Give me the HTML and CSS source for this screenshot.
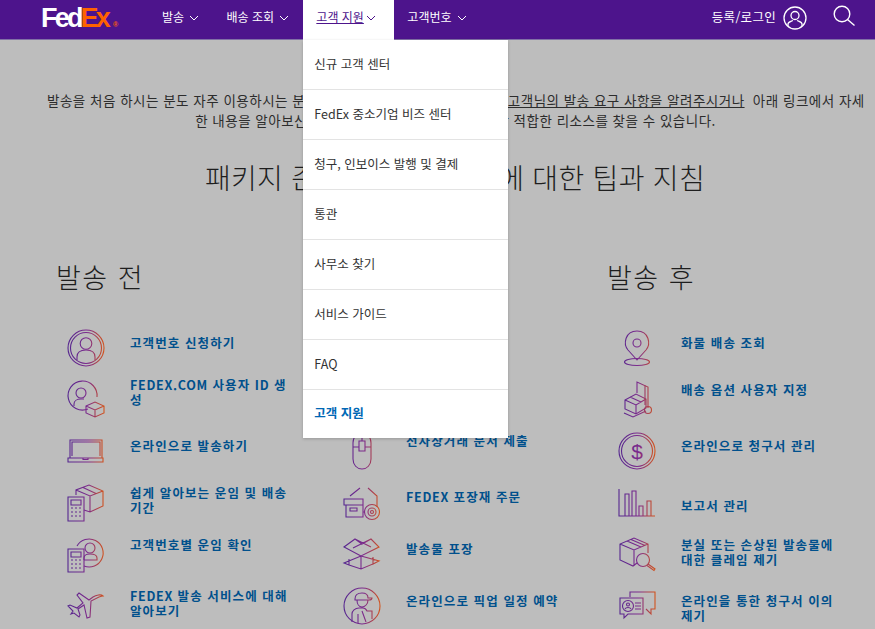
FILE: index.html
```html
<!DOCTYPE html>
<html lang="ko">
<head>
    <meta charset="UTF-8">
    <title>FedEx 고객 지원</title>
    <link rel="stylesheet" href="styles.css">
</head>
<body>
    <svg class="defs" width="0" height="0">
        <defs>
            <linearGradient id="g" gradientUnits="userSpaceOnUse" x1="4" y1="0" x2="40" y2="0">
                <stop offset="0" stop-color="#55268f"/>
                <stop offset="0.55" stop-color="#7d2b8c"/>
                <stop offset="1" stop-color="#d2531c"/>
            </linearGradient>
        </defs>
    </svg>

    <header class="top-nav">
        <a class="logo" href="#"><span class="logo-fed">Fed</span><span class="logo-ex">Ex</span><span class="logo-reg">®</span></a>
        <nav class="nav-links">
            <a href="#" class="nav-link nav-ship">발송 <svg class="chev" viewBox="0 0 10 6"><path d="M1 1l4 4 4-4"/></svg></a>
            <a href="#" class="nav-link nav-track">배송 조회 <svg class="chev" viewBox="0 0 10 6"><path d="M1 1l4 4 4-4"/></svg></a>
            <div class="nav-active">
                <a href="#" class="nav-link active"><u>고객 지원</u> <svg class="chev" viewBox="0 0 10 6"><path d="M1 1l4 4 4-4"/></svg></a>
                <ul class="dropdown">
                    <li><a href="#">신규 고객 센터</a></li>
                    <li><a href="#">FedEx 중소기업 비즈 센터</a></li>
                    <li><a href="#">청구, 인보이스 발행 및 결제</a></li>
                    <li><a href="#">통관</a></li>
                    <li><a href="#">사무소 찾기</a></li>
                    <li><a href="#">서비스 가이드</a></li>
                    <li><a href="#">FAQ</a></li>
                    <li class="dropdown-all"><a href="#">고객 지원</a></li>
                </ul>
            </div>
            <a href="#" class="nav-link nav-account">고객번호 <svg class="chev" viewBox="0 0 10 6"><path d="M1 1l4 4 4-4"/></svg></a>
        </nav>
        <div class="nav-right">
            <a href="#" class="nav-link login">등록/로그인</a>
            <svg class="user-icon" viewBox="0 0 24 24" fill="none" stroke="#fff" stroke-width="1.3">
                <circle cx="12" cy="12" r="11"/>
                <circle cx="12" cy="9.5" r="4"/>
                <path d="M5 20v-2c0-2 3-2.500 5-3.500M19 20v-2c0-2-3-2.500-5-3.500"/>
            </svg>
            <svg class="search-icon" viewBox="0 0 22 22" fill="none" stroke="#fff" stroke-width="1.4">
                <circle cx="9" cy="9" r="7.800"/>
                <path d="M14.500 14.500L21.500 20.500"/>
            </svg>
        </div>
    </header>

    <main class="content">
        <p class="intro">발송을 처음 하시는 분도 자주 이용하시는 분도 언제든지 모두 환영합니다. 먼저 <a href="#">고객님의 발송 요구 사항을 알려주시거나</a> 아래 링크에서 자세<br>한 내용을 알아보신 후 바로 고객님의 비즈니스에 가장 적합한 리소스를 찾을 수 있습니다.</p>
        <h1 class="title">패키지 준비 및 발송 과정에 대한 팁과 지침</h1>

        <div class="columns">
            <section class="col">
                <h2>발송 전</h2>
                <div class="row">
                    <svg class="ico" viewBox="0 0 44 44" fill="none" stroke="url(#g)"><circle cx="22" cy="23" r="18"/><circle cx="22" cy="23" r="15.500"/><circle cx="22" cy="18.500" r="5.800"/><path d="M13 35v-3c0-5 4-7 9-7s9 2 9 7v3"/></svg>
                    <a href="#" class="link t10">고객번호 신청하기</a>
                </div>
                <div class="row">
                    <svg class="ico" viewBox="0 0 44 44" fill="none" stroke="url(#g)"><path d="M24 32A14.500 14.500 0 1 1 33 20"/><circle cx="17" cy="16" r="5"/><path d="M10 29v-2c0-3 3-5 7-5h3"/><path d="M22 29l9-4 9 4v7l-9 4-9-4zM22 29l9 4 9-4M31 33v7"/></svg>
                    <a href="#" class="link t6"><span class="lat">FEDEX.COM</span> 사용자 <span class="lat">ID</span> 생<br>성</a>
                </div>
                <div class="row">
                    <svg class="ico" viewBox="0 0 44 44" fill="none" stroke="url(#g)"><path d="M6 29V11h32v18M8 27V13h28v14"/><path d="M4 29h35v4H4zM19 29v1.500h5V29"/></svg>
                    <a href="#" class="link t9">온라인으로 발송하기</a>
                </div>
                <div class="row">
                    <svg class="ico" viewBox="0 0 44 44" fill="none" stroke="url(#g)"><path d="M4 16h16v24H4zM7 19h10v5H7zM7 27h2M11 27h2M15 27h2M7 31h2M11 31h2M15 31h2M7 35h2M11 35h2M15 35h2"/><path d="M12 14V9l13-5 14 6v15l-13 6-6-2M12 9l14 6 13-5M26 15v16M19 6.500l13 6"/></svg>
                    <a href="#" class="link t4">쉽게 알아보는 운임 및 배송<br>기간</a>
                </div>
                <div class="row">
                    <svg class="ico" viewBox="0 0 44 44" fill="none" stroke="url(#g)"><path d="M4 16h16v23H4zM7 19h10v5H7zM7 27h2M11 27h2M15 27h2M7 31h2M11 31h2M15 31h2M7 35h2M11 35h2M15 35h2"/><path d="M13 13a14 14 0 1 1 7 20"/><circle cx="26" cy="15" r="5"/><path d="M20 27v-2c0-3 3-4 6-4s7 1 7 4v2h-13"/></svg>
                    <a href="#" class="link t4">고객번호별 운임 확인</a>
                </div>
                <div class="row">
                    <svg class="ico" viewBox="0 0 44 44" fill="none" stroke="url(#g)"><path d="M39 11c-2-2-7-1-10 1l-4 3-10-7-2 2 6 8-6 5-7-3-2 1 5 5-2 3 3-1 5 4 1-2-2-6 6-4 3 13 3-1 1-16 8-4c3-1 4-1 4-1z"/></svg>
                    <a href="#" class="link t3"><span class="lat">FEDEX</span> 발송 서비스에 대해<br>알아보기</a>
                </div>
            </section>

            <section class="col">
                <h2>발송 준비하기</h2>
                <div class="row">
                    <svg class="ico" viewBox="0 0 44 44" fill="none" stroke="url(#g)"><path d="M6 6h32v32H6z"/></svg>
                    <a href="#" class="link t10">운송장 작성</a>
                </div>
                <div class="row">
                    <svg class="ico" viewBox="0 0 44 44" fill="none" stroke="url(#g)"><path d="M6 6h32v32H6z"/></svg>
                    <a href="#" class="link t6">통관 서류 준비</a>
                </div>
                <div class="row">
                    <svg class="ico" viewBox="0 0 44 44" fill="none" stroke="url(#g)"><path d="M13 14c0-6 4-9 9-9s9 3 9 9v16c0 6-4 10-9 10s-9-4-9-10zM13 18h6M25 18h6"/><path d="M19 12h6v10h-6zM22 5v7"/></svg>
                    <a href="#" class="link t4">전자상거래 문서 제출</a>
                </div>
                <div class="row">
                    <svg class="ico" viewBox="0 0 44 44" fill="none" stroke="url(#g)"><path d="M4 18h19v6H4zM6 24v12h17V24M10 27h7v3h-7zM10 15l10-8M28 7l9 8v11"/><path d="M23 31h2"/><circle cx="32" cy="31" r="7.500"/><circle cx="32" cy="31" r="4"/><circle cx="32" cy="31" r="1.500"/></svg>
                    <a href="#" class="link t8"><span class="lat">FEDEX</span> 포장재 주문</a>
                </div>
                <div class="row">
                    <svg class="ico" viewBox="0 0 44 44" fill="none" stroke="url(#g)"><path d="M21 23L4 14l11-8 7 5 9-5 8 8zM21 23L4 30l5 2v-6M21 23l18 5-6 3v-7M21 23v13M9 32l12 4 12-5V28M15 6l16 8M31 6L13 15"/></svg>
                    <a href="#" class="link t8">발송물 포장</a>
                </div>
                <div class="row">
                    <svg class="ico" viewBox="0 0 44 44" fill="none" stroke="url(#g)"><circle cx="22" cy="21" r="18"/><path d="M15 14c0-4 3-6 7-6s6 2 6 5h4c0 1-1 2-3 2H15zM17 15c0 4 2 7 5 7s6-3 6-7M12 37V29c0-3 3-6 7-6h4c2 0 3 1 4 3h5v8M18 29v9M22 26l4 11"/></svg>
                    <a href="#" class="link t8">온라인으로 픽업 일정 예약</a>
                </div>
            </section>

            <section class="col">
                <h2>발송 후</h2>
                <div class="row">
                    <svg class="ico" viewBox="0 0 44 44" fill="none" stroke="url(#g)"><path d="M22 35L13 25C8 19 10 6 22 6s14 13 9 19z"/><circle cx="22" cy="18" r="4"/><ellipse cx="22" cy="37" rx="12.500" ry="3.500"/></svg>
                    <a href="#" class="link t10">화물 배송 조회</a>
                </div>
                <div class="row">
                    <svg class="ico" viewBox="0 0 44 44" fill="none" stroke="url(#g)"><path d="M10 23l11-6 10 5v9l-10 6-11-5zM10 23l11 5 10-6M21 28v9M15 20l11 5"/><path d="M22 16V5l11 5v21M30 8v20"/><path d="M9 36l9 4 13-6"/><circle cx="33" cy="33" r="3.500"/></svg>
                    <a href="#" class="link t5">배송 옵션 사용자 지정</a>
                </div>
                <div class="row">
                    <svg class="ico" viewBox="0 0 44 44" fill="none" stroke="url(#g)"><circle cx="22" cy="22" r="18"/><circle cx="22" cy="22" r="15.500"/><text x="22" y="29.500" class="dollar" fill="url(#g)" stroke="none">$</text></svg>
                    <a href="#" class="link t9">온라인으로 청구서 관리</a>
                </div>
                <div class="row">
                    <svg class="ico" viewBox="0 0 44 44" fill="none" stroke="url(#g)"><path d="M4 8v27h36M10 35V13h4v22M17 35V10h4v25M24 35V25h4v10M32 35V20h4v15"/></svg>
                    <a href="#" class="link t17">보고서 관리</a>
                </div>
                <div class="row">
                    <svg class="ico" viewBox="0 0 44 44" fill="none" stroke="url(#g)"><path d="M22 30l-4 3-13-6V11l14-6 14 6v9M5 11l14 6 14-6M19 17v16M12 8l14 6M16 6.500l14 6"/><circle cx="28" cy="27" r="6.500"/><path d="M33 31l7 5-1 1.500-7-5"/></svg>
                    <a href="#" class="link t4">분실 또는 손상된 발송물에<br>대한 클레임 제기</a>
                </div>
                <div class="row">
                    <svg class="ico" viewBox="0 0 44 44" fill="none" stroke="url(#g)"><path d="M15 12V7h25v17h-4v5l-5-5"/><path d="M5 13h23v16H13l-4 4v-4H5z"/><circle cx="13" cy="21" r="5.500"/><circle cx="13" cy="19.500" r="1.500"/><path d="M10 24c1-2 5-2 6 0M20 18h6M20 21h6M20 24h6"/></svg>
                    <a href="#" class="link t8">온라인을 통한 청구서 이의<br>제기</a>
                </div>
            </section>
        </div>
    </main>
</body>
</html>
```

FILE: styles.css
```css
:root {
    --purple: #4d148c;
    --page-bg: #bdbdbd;
    --link-color: #00508c;
    --text-color: #2c2c2c;
    --line-color: #e3e3e3;
}

html, body {
    margin: 0;
    height: 100%;
    overflow: hidden;
}

body {
    font-family: "Noto Sans CJK KR", "Open Sans", sans-serif;
    color: var(--text-color);
    background-color: var(--page-bg);
}

a {
    color: inherit;
    text-decoration: none;
}

.defs {
    position: absolute;
}

/* top bar */
.top-nav {
    display: flex;
    align-items: center;
    height: 39px;
    padding-left: 41px;
    background-color: var(--purple);
    border-bottom: 1px solid #8170a6;
    color: #fff;
}

.logo {
    display: flex;
    align-items: baseline;
    width: 121px;
    margin-top: 3px;
    font-family: "Liberation Sans", sans-serif;
    font-size: 27px;
    font-weight: bold;
    letter-spacing: -2.800px;
    line-height: 30px;
}

.logo-ex {
    color: #ff6200;
}

.logo-reg {
    margin-left: 5px;
    font-size: 7px;
    color: #ff6200;
    letter-spacing: 0;
}

.nav-links {
    display: flex;
    align-items: center;
    height: 100%;
    font-size: 12px;
}

.nav-link {
    display: inline-flex;
    align-items: center;
    margin-bottom: 6px;
    white-space: pre;
}

.nav-ship {
    margin-right: 27px;
}

.nav-track {
    margin-right: 14px;
}

.nav-active {
    position: relative;
    display: flex;
    align-items: center;
    width: 91px;
    height: 40px;
    margin-right: 13px;
    background-color: #fff;
}

.active {
    padding-left: 13px;
    color: var(--purple);
}

.chev {
    width: 10px;
    height: 6px;
    margin-left: 2px;
    margin-top: 2px;
    fill: none;
    stroke: currentColor;
    stroke-width: 1;
}

.nav-right {
    display: flex;
    align-items: center;
    margin-left: auto;
    margin-right: 20px;
    font-size: 12.500px;
    letter-spacing: 0.300px;
}

.user-icon {
    width: 24px;
    height: 24px;
    margin-left: 7px;
    margin-top: -4px;
}

.search-icon {
    width: 22px;
    height: 22px;
    margin-left: 26px;
    margin-top: -7px;
}

/* open menu */
.dropdown {
    position: absolute;
    top: 40px;
    left: 0;
    width: 205px;
    margin: 0;
    padding: 0;
    list-style: none;
    background-color: #fff;
    box-shadow: 0 1px 3px rgba(0, 0, 0, 0.2);
    z-index: 10;
}

.dropdown li {
    display: flex;
    align-items: center;
    box-sizing: border-box;
    height: 50px;
    padding-left: 11px;
    padding-bottom: 2px;
    border-bottom: 1px solid var(--line-color);
    font-size: 12.500px;
    color: #333;
}

.dropdown .dropdown-all {
    height: 48px;
    padding-bottom: 3px;
    border-bottom: none;
    color: #0068b5;
    font-weight: bold;
}

/* page */
.content {
    padding-top: 50px;
}

.intro {
    width: 817px;
    margin: 0 0 0 47px;
    font-size: 13.500px;
    line-height: 20px;
    letter-spacing: 0.500px;
    text-align: center;
    white-space: nowrap;
}

.intro a {
    margin-left: -4px;
    margin-right: 4px;
    text-decoration: underline;
}

.title {
    margin: 27px 0 0 35px;
    font-size: 28px;
    font-weight: 300;
    line-height: 40px;
    letter-spacing: 0.300px;
    text-align: center;
    white-space: nowrap;
    color: #1e1e1e;
}

.columns {
    display: grid;
    grid-template-columns: 276px 275px 268px;
    margin: 60px 0 0 56px;
}

.col h2 {
    height: 68px;
    margin: 0;
    font-size: 27px;
    font-weight: 300;
    line-height: 40px;
    letter-spacing: 1.500px;
    white-space: nowrap;
    color: #1e1e1e;
}

.row {
    display: flex;
    height: 52px;
    padding-left: 8px;
}

.ico {
    flex: none;
    width: 44px;
    height: 44px;
    stroke-width: 1.100;
}

.dollar {
    font-family: "Liberation Sans", sans-serif;
    font-size: 21px;
    text-anchor: middle;
}

.link {
    margin-left: 22px;
    font-size: 12.500px;
    font-weight: bold;
    line-height: 15px;
    letter-spacing: 1.100px;
    white-space: nowrap;
    color: var(--link-color);
}

.lat {
    letter-spacing: 0.700px;
}

.t3 { margin-top: 3px; }
.t4 { margin-top: 4px; }
.t5 { margin-top: 5px; }
.t8 { margin-top: 8px; }
.t9 { margin-top: 9px; }
.t10 { margin-top: 10px; }
.t17 { margin-top: 17px; }
```
